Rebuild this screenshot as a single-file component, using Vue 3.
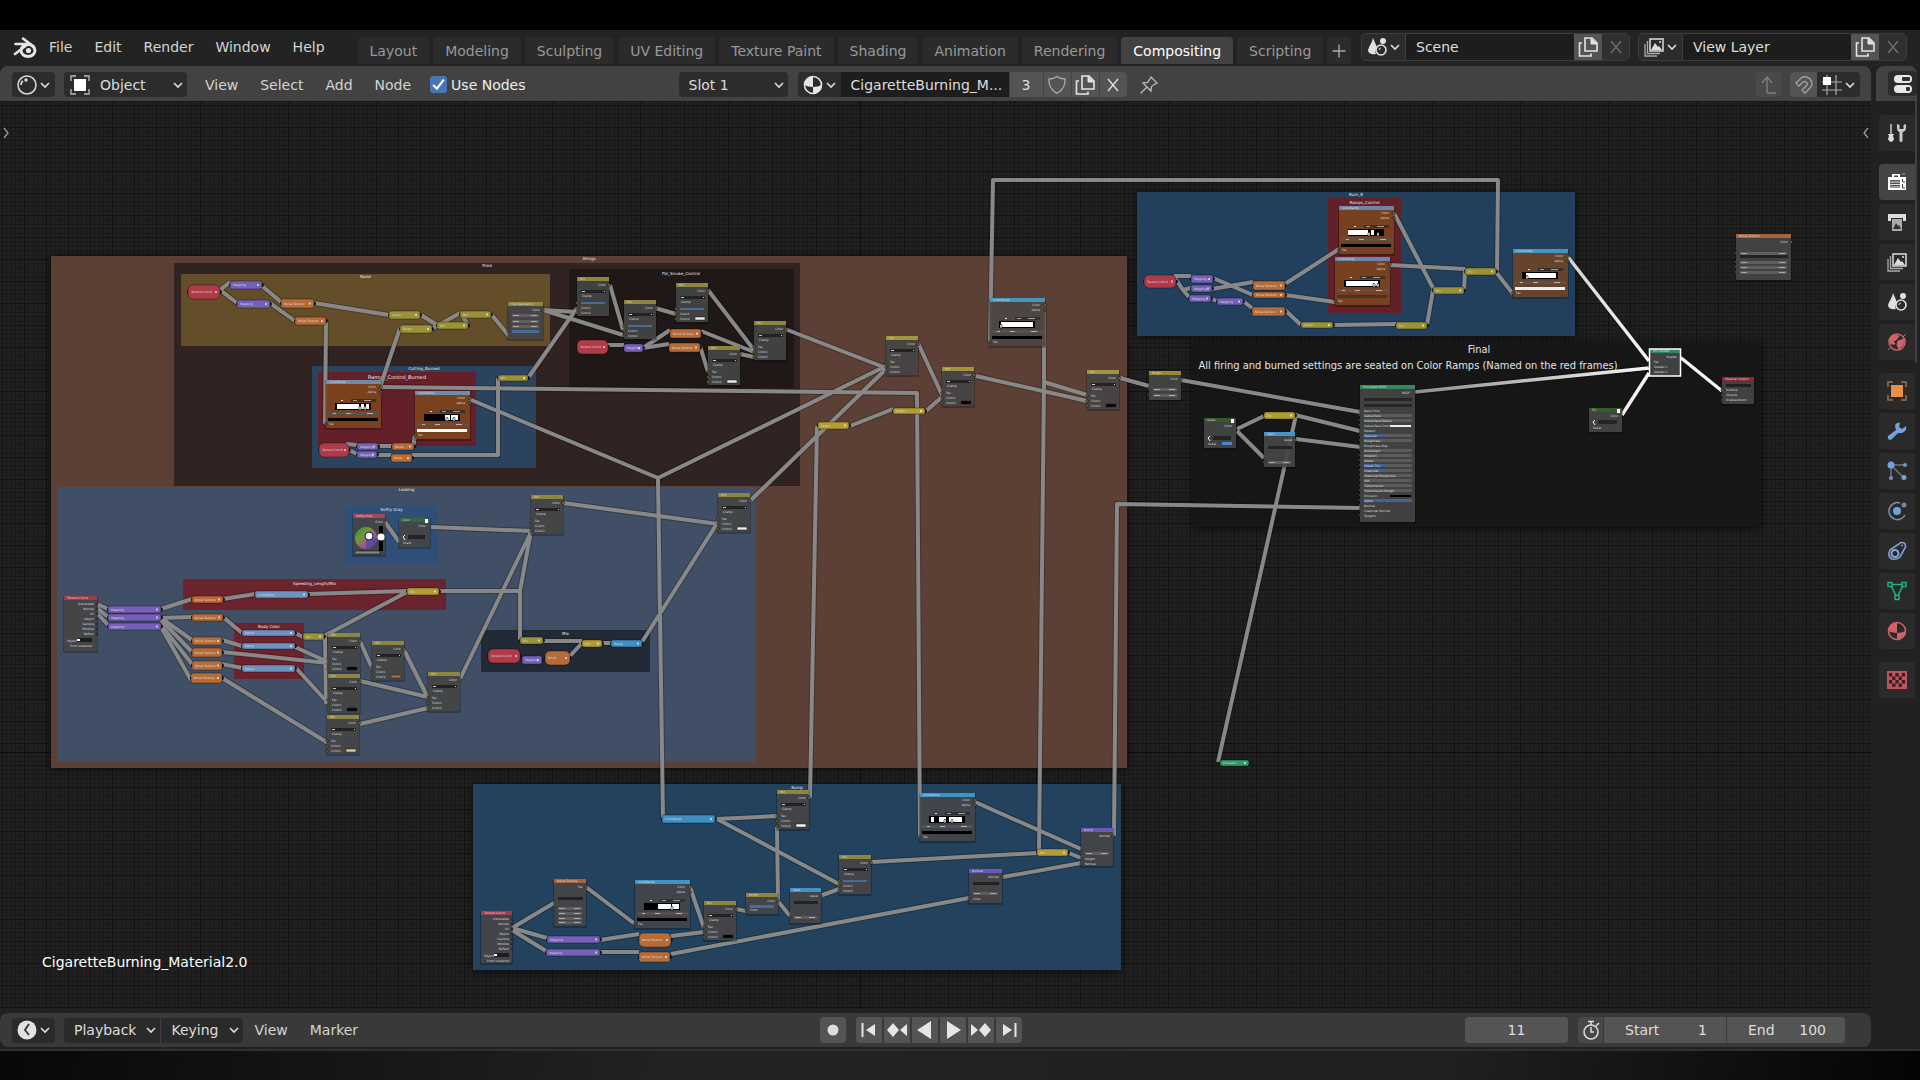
<template>
  <div class="screen">
    <header class="topbar">
      <svg class="logo" viewBox="0 0 24 22" v-html="icons.blender"></svg>
      <nav class="menus">
        <a v-for="m in menus" :key="m" href="#">{{ m }}</a>
      </nav>
      <nav class="tabs">
        <button
          v-for="t in workspaces"
          :key="t"
          class="tab"
          :class="{ active: t === activeTab }"
          @click="activeTab = t"
        >{{ t }}</button>
        <button class="tab plus" aria-label="Add workspace">
          <svg class="ico" viewBox="0 0 20 20" v-html="icons.plus"></svg>
        </button>
      </nav>
      <div class="datablocks">
        <div v-for="d in datablocks" :key="d.icon" class="datablock">
          <button class="pick" :aria-label="d.name">
            <svg class="ico" viewBox="0 0 20 20" v-html="icons[d.icon]"></svg>
            <svg class="chev" viewBox="0 0 10 10" v-html="icons.down"></svg>
          </button>
          <input v-model="d.name" type="text" :aria-label="d.icon" />
          <button class="copy" aria-label="New">
            <svg class="ico" viewBox="0 0 20 20" v-html="icons.copy"></svg>
          </button>
          <button class="close dim" aria-label="Unlink">
            <svg class="ico" viewBox="0 0 20 20" v-html="icons.close"></svg>
          </button>
        </div>
      </div>
    </header>

    <main class="workspace">
      <section class="editor">
        <div class="bar editor-header">
          <button class="pick boxed" aria-label="Editor type">
            <svg class="ico" viewBox="0 0 20 20" v-html="icons.shaderEditor"></svg>
            <svg class="chev" viewBox="0 0 10 10" v-html="icons.down"></svg>
          </button>
          <label class="drop mode">
            <svg class="ico" viewBox="0 0 20 20" v-html="icons.objectMode"></svg>
            <select aria-label="Shader type"><option>Object</option></select>
            <svg class="chev" viewBox="0 0 10 10" v-html="icons.down"></svg>
          </label>
          <nav class="menus header-menus">
            <a v-for="m in editorMenus" :key="m" href="#">{{ m }}</a>
          </nav>
          <label class="check">
            <input v-model="useNodes" type="checkbox" />
            <span class="tick"><svg viewBox="0 0 16 16" v-html="icons.tick"></svg></span>
            Use Nodes
          </label>
          <div class="slot-group">
            <label class="drop slot">
              <select aria-label="Slot"><option>Slot 1</option></select>
              <svg class="chev" viewBox="0 0 10 10" v-html="icons.down"></svg>
            </label>
            <div class="material">
              <button class="pick" aria-label="Browse material">
                <svg class="ico" viewBox="0 0 20 20" v-html="icons.material"></svg>
                <svg class="chev" viewBox="0 0 10 10" v-html="icons.down"></svg>
              </button>
              <input type="text" value="CigaretteBurning_M..." aria-label="Material name" />
              <button class="users">3</button>
              <button aria-label="Fake user">
                <svg class="ico soft" viewBox="0 0 20 20" v-html="icons.shield"></svg>
              </button>
              <button aria-label="New material">
                <svg class="ico" viewBox="0 0 20 20" v-html="icons.copy"></svg>
              </button>
              <button aria-label="Unlink material">
                <svg class="ico" viewBox="0 0 20 20" v-html="icons.close"></svg>
              </button>
            </div>
            <button class="bare" aria-label="Pin">
              <svg class="ico soft" viewBox="0 0 20 20" v-html="icons.pin"></svg>
            </button>
          </div>
          <div class="snap-group">
            <button class="up" aria-label="Parent node tree">
              <svg class="ico" viewBox="0 0 20 20" v-html="icons.up"></svg>
            </button>
            <div class="snap">
              <button class="magnet" aria-label="Snap">
                <svg class="ico" viewBox="0 0 20 20" v-html="icons.magnet"></svg>
              </button>
              <button class="pick" aria-label="Snap target">
                <svg class="ico" viewBox="0 0 20 20" v-html="icons.grid"></svg>
                <svg class="chev" viewBox="0 0 10 10" v-html="icons.down"></svg>
              </button>
            </div>
          </div>
        </div>

        <div class="canvas">
          <svg class="tree" width="100%" height="100%">
            <defs>
              <pattern id="grid" width="22" height="22" x="2" y="4" patternUnits="userSpaceOnUse">
                <rect width="22" height="22" fill="#202020" />
                <path d="M4.5 0V22M9.5 0V22M13.5 0V22M18.5 0V22M0 4.5H22M0 9.5H22M0 13.5H22M0 18.5H22" stroke="#191919" />
                <path d="M.5 0V22M0 .5H22" stroke="#111" />
              </pattern>
              <linearGradient id="lit" gradientUnits="userSpaceOnUse" x1="1415" x2="1640" y1="0" y2="0">
                <stop offset="0" stop-color="#8c8c8c" />
                <stop offset="1" stop-color="#f4f4f4" />
              </linearGradient>
              <linearGradient id="hue" x1="0" y1="0" x2="1" y2="1">
                <stop offset="0" stop-color="#1c8d3e" />
                <stop offset=".35" stop-color="#6e9a35" />
                <stop offset=".65" stop-color="#a8508c" />
                <stop offset="1" stop-color="#4a4ec4" />
              </linearGradient>
              <filter id="shade" x="-5%" y="-5%" width="110%" height="110%">
                <feDropShadow dx="0" dy="1" stdDeviation="4" flood-color="#000" flood-opacity=".7" />
              </filter>
            </defs>

            <rect width="100%" height="100%" fill="url(#grid)" />
            <path d="M860.5 0V920M0 651.5H1880" stroke="#0c0c0c" />

            <!-- tree coordinates start at the top of the window -->
            <g transform="translate(0 -101)">
              <g v-for="(f, i) in frames" :key="'f' + i">
                <rect
                  :x="f.x" :y="f.y" :width="f.w" :height="f.h"
                  :fill="f.c" fill-opacity=".92"
                  :filter="f.shadow ? 'url(#shade)' : null"
                />
                <text
                  v-if="f.t"
                  class="frame-label"
                  :x="f.tx || f.x + f.w / 2"
                  :y="f.y + (f.dy || 4)"
                  :font-size="f.fs || 4"
                >{{ f.t }}</text>
              </g>

              <polyline v-for="(l, i) in links" :key="'s' + i" class="link-edge" :points="l" />
              <polyline v-for="(l, i) in links" :key="'l' + i" class="link" :points="l" />
              <polyline v-for="(l, i) in litLinks" :key="'e' + i" class="link-edge" :points="l" />
              <polyline v-for="(l, i) in litLinks" :key="'a' + i" class="link lit" :points="l" />

              <!-- collapsed nodes -->
              <g v-for="(n, i) in pills" :key="'p' + i">
                <circle :cx="n.x + 1" :cy="n.y + n.h / 2" r="2" fill="#151515" />
                <circle :cx="n.x + n.w" :cy="n.y + n.h / 2" r="2" fill="#151515" />
                <rect
                  :x="n.x" :y="n.y" :width="n.w" :height="n.h" :rx="n.h > 12 ? 5 : 2"
                  :fill="n.c" stroke="#000" stroke-opacity=".45" stroke-width=".8"
                />
                <text class="tiny" :x="n.x + 3" :y="n.y + n.h / 2 + 1">{{ n.t }}</text>
                <rect :x="n.x + n.w - 5" :y="n.y + n.h / 2 - 1" width="2" height="2" fill="#fff" fill-opacity=".6" />
              </g>

              <!-- open nodes -->
              <g v-for="(n, i) in nodes" :key="'n' + i" :transform="`translate(${n.x} ${n.y})`">
                <rect x="-1" y="0" :width="n.w + 2" :height="n.h + 2" rx="1" fill="#000" fill-opacity=".25" />
                <rect :width="n.w" :height="n.h" rx="1" :fill="n.body || '#474747'" fill-opacity=".9" />
                <rect :width="n.w" height="4" :fill="n.c" />
                <text class="tiny" x="3" y="3">{{ n.t }}</text>

                <g v-if="n.kind === 'mix'">
                  <text class="tiny end" :x="n.w - 3" y="9">Color</text>
                  <rect x="4" y="13" :width="n.w - 7" height="3" fill="#222" />
                  <rect x="5" y="14" width="3" height="1" fill="#ccc" />
                  <rect :x="n.w - 5" y="14" width="1" height="1" fill="#ccc" />
                  <text class="tiny" x="5" y="20">Clamp</text>
                  <text v-if="!n.fac" class="tiny" x="4" y="27">Fac</text>
                  <rect v-else x="4" y="25" :width="n.w - 8" height="2" fill="#4a6a9c" />
                  <text class="tiny" x="4" y="32">Color1</text>
                  <text class="tiny" x="4" y="37">Color2</text>
                  <rect v-if="n.sw" :x="n.w - 13" y="34" width="10" height="3" :fill="n.sw" stroke="#222" stroke-width=".6" />
                  <circle :cx="n.w" cy="8" r="1.3" fill="#a9a45c" stroke="#111" stroke-width=".8" />
                  <circle v-for="y in [26, 31, 36]" :key="y" cx="0" :cy="y" r="1.2" fill="#a9a45c" stroke="#111" stroke-width=".8" />
                </g>

                <g v-else-if="n.kind === 'ramp'">
                  <text class="tiny end" x="50" y="8">Color</text>
                  <text class="tiny end" x="50" y="13">Alpha</text>
                  <rect x="15" y="20" width="2" height="1" fill="#ddd" />
                  <rect x="25" y="19" width="25" height="3" fill="#2c2c2c" fill-opacity=".8" />
                  <path d="M27 20.5h4M38 20.5h7" stroke="#bbb" stroke-width=".8" />
                  <rect x="9" y="23" width="36" height="7" fill="#000" />
                  <rect
                    v-for="(b, j) in n.bands" :key="j"
                    :x="b[0]" y="24" :width="b[1]" height="5" fill="#fff"
                  />
                  <path v-for="h in n.stops" :key="h" :d="`M${h} 30v-3l1 -1l1 1v3z`" fill="#fff" stroke="#000" stroke-width=".6" />
                  <rect x="2" y="32" width="51" height="3" fill="#5a5550" fill-opacity=".8" />
                  <path d="M7 33.5h3M20 33.5h5M41 33.5h6" stroke="#ccc" stroke-width=".8" />
                  <rect x="2" y="38" width="50" height="3" :fill="n.sw || '#000'" />
                  <text class="tiny" x="3" y="45">Fac</text>
                  <circle cx="55" cy="7" r="1.3" fill="#b8ac4a" stroke="#111" stroke-width=".8" />
                  <circle cx="55" cy="12" r="1.3" fill="#888" stroke="#111" stroke-width=".8" />
                  <circle cx="0" cy="44" r="1.3" fill="#888" stroke="#111" stroke-width=".8" />
                </g>

                <g v-else-if="n.kind === 'coord'">
                  <g v-for="(t, j) in coordOutputs" :key="t">
                    <text class="tiny end" :x="n.w - 3" :y="9 + j * 5">{{ t }}</text>
                    <circle :cx="n.w" :cy="8 + j * 5" r="1" fill="#6363c7" stroke="#111" stroke-width=".8" />
                  </g>
                  <rect x="13" y="42" width="15" height="4" fill="#1c1c1c" />
                  <rect x="13" y="43" width="3" height="2" fill="#fff" />
                  <text class="tiny" x="3" y="46">Object</text>
                  <text class="tiny" x="6" y="51">From Instancer</text>
                </g>

                <g v-else-if="n.kind === 'wheel'">
                  <text class="tiny end" :x="n.w - 2" y="9">Color</text>
                  <ellipse cx="13" cy="24" rx="11" ry="11" fill="url(#hue)" />
                  <path d="M13 24L24 24A11 11 0 0 1 13 35Z" fill="#3c46a0" fill-opacity=".6" />
                  <circle cx="16" cy="22" r="4" fill="#fff" stroke="#1a1a5a" />
                  <rect x="26" y="12" width="4" height="25" fill="#000" />
                  <circle cx="28" cy="23" r="3.5" fill="#fff" />
                  <rect x="2" y="37" width="25" height="3" fill="#888" stroke="#111" stroke-width=".6" />
                </g>

                <g v-else-if="n.kind === 'principled'">
                  <text class="tiny end" x="50" y="9">BSDF</text>
                  <rect x="4" y="13" width="48" height="3" fill="#262626" />
                  <rect x="4" y="19" width="48" height="3" fill="#262626" />
                  <g v-for="(r, j) in bsdfRows" :key="r">
                    <rect v-if="![0, 3, 4, 7, 17, 19, 20, 21].includes(j)" x="4" :y="24 + j * 5" width="48" height="3" fill="#5b5b5b" />
                    <rect v-if="[5, 11, 12].includes(j)" x="4" :y="24 + j * 5" width="21" height="3" fill="#446297" />
                    <rect v-if="j === 18" x="4" :y="24 + j * 5" width="48" height="3" fill="#446297" />
                    <text class="tiny" x="4" :y="27 + j * 5">{{ r }}</text>
                    <circle cx="0" :cy="25 + j * 5" r="1" fill="#888" stroke="#111" stroke-width=".6" />
                  </g>
                  <rect x="30" y="40" width="21" height="2" fill="#eee" />
                  <rect x="30" y="110" width="21" height="2" fill="#000" />
                </g>

                <g v-else-if="n.kind === 'group'">
                  <rect :x="n.w - 5" y="1" width="3" height="4" fill="#fff" />
                  <text class="tiny end" :x="n.w - 4" y="9">Color</text>
                  <path :d="`M6 ${n.h - 12}l-2 2l2 3`" stroke="#fff" fill="none" />
                  <rect x="9" :y="n.h - 12" :width="n.w - 14" height="4" fill="#242424" />
                  <rect v-if="n.sw" :x="n.w - 14" :y="n.h - 6" width="10" height="3" :fill="n.sw" />
                  <text class="tiny" x="4" :y="n.h - 3">Scale</text>
                </g>

                <g v-else>
                  <text class="tiny end" :x="n.w - 3" y="9">{{ n.out }}</text>
                  <g v-for="y in n.rows" :key="y">
                    <rect x="4" :y="y" :width="n.w - 8" height="3" fill="#5e5e5e" />
                    <path :d="`M5 ${y + 1.5}h6M${n.w - 12} ${y + 1.5}h6`" stroke="#bbb" stroke-width=".8" />
                    <circle cx="0" :cy="y + 1" r="1.1" fill="#999" stroke="#111" stroke-width=".7" />
                  </g>
                  <rect v-if="n.dd" x="4" :y="n.dd" :width="n.w - 7" height="3" fill="#222" />
                  <rect v-if="n.hl" x="4" :y="n.hl" :width="n.w - 8" height="3" fill="#4a6a9c" />
                  <g v-for="(t, j) in n.ins" :key="t">
                    <text class="tiny" x="4" :y="n.inY + j * 5">{{ t }}</text>
                    <circle cx="0" :cy="n.inY - 1 + j * 5" r="1.1" fill="#999" stroke="#111" stroke-width=".7" />
                  </g>
                  <circle v-if="n.out" :cx="n.w" cy="8" r="1.2" fill="#a9a45c" stroke="#111" stroke-width=".8" />
                </g>
                <rect v-if="n.active" x="-.5" y="0" :width="n.w + 1" :height="n.h" fill="none" stroke="#fff" stroke-width="1.5" />
              </g>

              <text class="note" x="1479" y="353">Final</text>
              <text class="note" x="1408" y="369">All firing and burned settings are seated on Color Ramps (Named on the red frames)</text>
              <text class="tree-name" x="42" y="967">CigaretteBurning_Material2.0</text>
            </g>
          </svg>
          <button class="edge left" aria-label="Show toolbar">
            <svg viewBox="0 0 8 14"><path d="M2 2l4 5l-4 5" /></svg>
          </button>
          <button class="edge right" aria-label="Show sidebar">
            <svg viewBox="0 0 8 14"><path d="M6 2l-4 5l4 5" /></svg>
          </button>
        </div>

        <div class="bar timeline">
          <button class="pick boxed" aria-label="Timeline">
            <svg class="ico" viewBox="0 0 20 20" v-html="icons.clock"></svg>
            <svg class="chev" viewBox="0 0 10 10" v-html="icons.down"></svg>
          </button>
          <div class="pair">
            <button v-for="m in ['Playback', 'Keying']" :key="m">
              {{ m }}
              <svg class="chev" viewBox="0 0 10 10" v-html="icons.down"></svg>
            </button>
          </div>
          <nav class="menus time-menus">
            <a href="#">View</a>
            <a href="#">Marker</a>
          </nav>
          <div class="transport">
            <button class="rec" aria-label="Auto keying">
              <svg class="ico" viewBox="0 0 20 20"><circle cx="10" cy="10" r="5.500" fill="#ddd" /></svg>
            </button>
            <div class="play">
              <button v-for="p in transport" :key="p" :aria-label="p">
                <svg class="ico" viewBox="0 0 20 20" v-html="icons[p]"></svg>
              </button>
            </div>
          </div>
          <div class="frames">
            <input class="current" type="text" v-model="frame" aria-label="Current frame" />
            <div class="range">
              <button aria-label="Use preview range">
                <svg class="ico" viewBox="0 0 20 20" v-html="icons.stopwatch"></svg>
              </button>
              <label>Start <input type="text" value="1" /></label>
              <label>End <input type="text" value="100" /></label>
            </div>
          </div>
        </div>
      </section>

      <aside class="props">
        <div class="props-header">
          <button aria-label="Properties editor">
            <svg class="ico" viewBox="0 0 20 20" v-html="icons.props"></svg>
          </button>
        </div>
        <div class="props-tabs">
          <div v-for="(g, i) in propGroups" :key="i" class="prop-group">
            <button v-for="p in g" :key="p" :class="{ on: p === 'render' }" :aria-label="p">
              <svg class="ico" viewBox="0 0 20 20" v-html="icons[p]"></svg>
            </button>
          </div>
          <span class="scroll"></span>
        </div>
      </aside>
    </main>
    <footer class="strip"></footer>
  </div>
</template>

<script setup>
import { ref } from "vue";

const menus = ["File", "Edit", "Render", "Window", "Help"];
const editorMenus = ["View", "Select", "Add", "Node"];
const workspaces = [
  "Layout", "Modeling", "Sculpting", "UV Editing", "Texture Paint",
  "Shading", "Animation", "Rendering", "Compositing", "Scripting",
];
const activeTab = ref("Compositing");
const useNodes = ref(true);
const frame = ref("11");
const datablocks = ref([
  { icon: "scene", name: "Scene" },
  { icon: "viewLayer", name: "View Layer" },
]);
const transport = ["first", "prevKey", "reverse", "forward", "nextKey", "last"];
const propGroups = [
  ["tool"],
  ["render", "output", "viewLayer", "scene", "world"],
  ["object", "modifier", "particles", "physics", "constraint", "mesh", "materialRed"],
  ["texture"],
];

const sceneIcon =
  '<path d="M6 1C8 6 10 9 10 12C8 12 8 15 9 17C4 18 1 16 1 13C2 9 5 6 6 1Z" fill="#e0e0e0"/><circle cx="16" cy="4" r="3" fill="#e0e0e0"/><circle cx="14" cy="13" r="5" fill="none" stroke="#e0e0e0" stroke-width="1.6"/><path d="M12 13q0-2 2-2" stroke="#e0e0e0" fill="none"/>';
const sphere = (c) =>
  `<circle cx="10" cy="10" r="8.5" fill="none" stroke="${c}" stroke-width="1.6"/><path d="M10 1.500A8.500 8.500 0 0 0 1.500 10Q5 12 10 12ZM10 12Q15 12 18.500 10A8.500 8.500 0 0 1 10 18.500Z" fill="${c}"/>`;

const icons = {
  blender:
    '<path d="M10 1.500L20.500 9.500M2.500 7H16M2 17L13 8.500" fill="none" stroke="#e6e6e6" stroke-width="2.600" stroke-linecap="round"/><ellipse cx="15" cy="13.500" rx="7" ry="6" fill="none" stroke="#e6e6e6" stroke-width="3"/><circle cx="15.500" cy="13.500" r="2.600" fill="#e6e6e6"/>',
  down: '<path d="M1 3L5 7L9 3" fill="none" stroke="#ddd" stroke-width="1.600"/>',
  plus: '<path d="M10 3.500V16.500M3.500 10H16.500" stroke="#aaa" stroke-width="1.400"/>',
  close: '<path d="M5 4L15 16M15 4L5 16" stroke="#ddd" stroke-width="1.500"/>',
  copy:
    '<path d="M7 1H14L19 6V14H7Z" fill="none" stroke="#e4e4e4" stroke-width="1.600"/><path d="M13 1V7H19" fill="#e4e4e4" stroke="#e4e4e4"/><path d="M4 6H1.500V19H13V16.500" fill="none" stroke="#e4e4e4" stroke-width="1.600"/>',
  scene: sceneIcon,
  viewLayer:
    '<rect x="6" y="2" width="13" height="12" fill="none" stroke="#ddd" stroke-width="1.500"/><path d="M7 13L11 6L14 10L15 9L18 13Z" fill="#ddd"/><circle cx="16" cy="5" r="1" fill="#ddd"/><path d="M3.500 4V16.500H16M1 7V19H13" fill="none" stroke="#aaa" stroke-width="1.300"/>',
  shaderEditor:
    '<circle cx="10" cy="10" r="9" fill="none" stroke="#ddd" stroke-width="1.500"/><circle cx="9" cy="5" r="1.700" fill="#ddd"/><path d="M4 10Q4 7 6 6" stroke="#ddd" stroke-width="1.800" fill="none"/>',
  objectMode:
    '<rect x="4" y="4" width="12" height="12" fill="#fff"/><path d="M1 6V1H6M14 1H19V6M19 14V19H14M6 19H1V14" fill="none" stroke="#bbb" stroke-width="1.300"/>',
  tick: '<path d="M3 8.500L6.500 12L13 3.500" fill="none" stroke="#fff" stroke-width="2"/>',
  material: sphere("#e6e6e6"),
  shield: '<path d="M10 1.500Q13 4 18 4Q19 13 10 18.500Q1 13 2 4Q7 4 10 1.500Z" fill="none" stroke="#aaa" stroke-width="1.300"/>',
  pin: '<path d="M12 2L18 8L16 9L12.500 11.500L12 16L4 8L8.500 7.500L11 4ZM8 12L1.500 18.500" fill="none" stroke="#bbb" stroke-width="1.300"/>',
  up: '<path d="M8 18V3M3 8L8 2L13 8M8 18H17" fill="none" stroke="#808080" stroke-width="1.400"/>',
  magnet:
    '<path d="M2 8L7 3Q12 0 16 4Q20 9 16 13L11 18L8 15L13 10Q14 8 12 7Q11 6 9 7L5 11Z" fill="none" stroke="#a4a4a4" stroke-width="1.300"/>',
  grid: '<path d="M0 7H20M0 15H20M5 0V20M14 0V20" stroke="#aaa" stroke-width="1.200"/><rect x="1" y="2" width="8" height="8" fill="#fff"/>',
  clock: '<circle cx="10" cy="10" r="9.500" fill="#e2e2e2"/><path d="M12 4L8 10L12 15" fill="none" stroke="#333" stroke-width="1.800"/>',
  first: '<path d="M3.500 3V17" stroke="#e6e6e6" stroke-width="2"/><path d="M16 4V16L7 10Z" fill="#e6e6e6"/>',
  last: '<path d="M16.500 3V17" stroke="#e6e6e6" stroke-width="2"/><path d="M4 4V16L13 10Z" fill="#e6e6e6"/>',
  prevKey: '<path d="M6 3L12 10L6 17L0 10ZM20 4V16L13 10Z" fill="#e6e6e6"/>',
  nextKey: '<path d="M14 3L20 10L14 17L8 10ZM0 4V16L7 10Z" fill="#e6e6e6"/>',
  reverse: '<path d="M16 1V19L2 10Z" fill="#e6e6e6"/>',
  forward: '<path d="M4 1V19L18 10Z" fill="#e6e6e6"/>',
  stopwatch:
    '<circle cx="10" cy="12" r="7" fill="none" stroke="#ddd" stroke-width="1.500"/><path d="M10 7V12H13M10 5V1M7 1.500H13M15 6L18 3" fill="none" stroke="#ddd" stroke-width="1.500"/>',
  props:
    '<rect x="1" y="1" width="18" height="8" rx="4" fill="#e8e8e8"/><rect x="9" y="3" width="8" height="4" rx="1" fill="#303030"/><rect x="1" y="11" width="18" height="8" rx="4" fill="#e8e8e8"/><rect x="13" y="13" width="4" height="4" rx="1" fill="#303030"/>',
  tool:
    '<path d="M4 1V11" stroke="#ccc" stroke-width="1.500"/><path d="M1 11H7L6 13L7 16Q6 19 4 19Q2 19 1 16L2 13Z" fill="#ddd"/><path d="M10 1V5Q10 8 12.500 9V18Q14 20 15.500 18V9Q19 8 19 5V1L16.500 2V6H12.500V2Z" fill="#ccc"/>',
  render:
    '<path d="M5 5V2H13V5H19V18H1V5Z" fill="#fff"/><rect x="7" y="3.500" width="4" height="1.500" fill="#444"/><rect x="3" y="8" width="10" height="8" fill="#555"/><path d="M3 10H13M3 12.500H13M3 15H13" stroke="#ddd"/><path d="M15.500 7V10H18M15.500 12V16H18" fill="none" stroke="#444"/><path d="M15 2H18" stroke="#aaa"/>',
  output: '<path d="M1 2H19V9H16V6H4V9H1Z" fill="#ddd"/><rect x="5" y="7" width="10" height="12" fill="#aaa"/><path d="M6 17L9 11L11 14L12 13L14 17Z" fill="#333"/>',
  world:
    '<circle cx="10" cy="10" r="8" fill="none" stroke="#d0626c" stroke-width="1.500"/><path d="M3 7L7 3L12 4L9 8L6 9L8 12L4 12ZM11 9L17 7L16 13L12 17L10 13ZM1 18L4 15M16 5L19 2" fill="#d0626c" stroke="#d0626c"/>',
  object:
    '<rect x="4" y="4" width="12" height="12" fill="#e8914a"/><path d="M1 6V1H6M14 1H19V6M19 14V19H14M6 19H1V14" fill="none" stroke="#9a7150" stroke-width="1.500"/>',
  modifier: '<path d="M19 5L15 8L12 6L13 2Q9 1 8 5L9 9L1 15Q0 18 3 19L5 18L11 12Q15 13 18 10Q20 8 19 5Z" fill="#76a0dc"/>',
  particles:
    '<path d="M4 4H18M4 4V18M4 4L17 17" stroke="#6a7480" stroke-width="1.500"/><circle cx="4" cy="4" r="3.500" fill="#76a0dc"/><circle cx="18" cy="4" r="2" fill="#7d95b8"/><circle cx="4" cy="17" r="2" fill="#7d95b8"/><circle cx="17" cy="16.500" r="2.500" fill="#76a0dc"/>',
  physics:
    '<circle cx="10" cy="10" r="4" fill="#76a0dc"/><path d="M13 2A8.500 8.500 0 1 0 18 14" fill="none" stroke="#8090a8" stroke-width="1.500"/><circle cx="17" cy="4" r="2.500" fill="#6f87ab"/>',
  constraint:
    '<path d="M3 9L14 1.500Q19 1 18.500 6L13 16Q10 19 5 18Q0 15 3 9Z" fill="none" stroke="#7f9fcc" stroke-width="1.600"/><circle cx="8" cy="12.500" r="3.500" fill="none" stroke="#7fa9e4" stroke-width="2"/><circle cx="15" cy="4.500" r="1" fill="#76a0dc"/>',
  mesh: '<path d="M3.500 3.500H16.500L10 16.500Z" fill="none" stroke="#1fb083" stroke-width="1.500"/><g fill="#262626" stroke="#1fb083" stroke-width="1.500"><rect x="1" y="1.500" width="4" height="4"/><rect x="15" y="1.500" width="4" height="4"/><rect x="8" y="14.500" width="4" height="4"/></g>',
  materialRed: sphere("#d0626c"),
  texture:
    '<rect x="0" y="1" width="20" height="18" fill="#b85560"/><path d="M2 3h3.200v3.500H2zM8.400 3h3.200v3.500H8.400zM14.800 3h3.200v3.500h-3.200zM5.200 6.500h3.200v3.500H5.200zM11.600 6.500h3.200v3.500h-3.200zM2 10h3.200v3.500H2zM8.400 10h3.200v3.500H8.400zM14.800 10h3.200v3.500h-3.200zM5.200 13.500h3.200v3.500H5.200zM11.600 13.500h3.200v3.500h-3.200z" fill="#3c1c22"/>',
};

// x, y, w, h, colour, label
const frames = [
  { x: 51, y: 256, w: 1076, h: 512, c: "#624236", t: "Allings", shadow: true },
  { x: 174, y: 263, w: 626, h: 223, c: "#2d211f", t: "Fired" },
  { x: 181, y: 274, w: 369, h: 72, c: "#68532a", t: "Noise" },
  { x: 569, y: 269, w: 225, h: 119, c: "#1e1817", t: "Fbl_Smoke_Control", tx: 681, dy: 6 },
  { x: 312, y: 366, w: 224, h: 102, c: "#2d4663", t: "Cutting_Burned" },
  { x: 318, y: 372, w: 158, h: 74, c: "#681d25", t: "Ramps_Control_Burned", dy: 7, fs: 5 },
  { x: 57, y: 487, w: 699, h: 275, c: "#3e5069", t: "Looking" },
  { x: 345, y: 506, w: 93, h: 57, c: "#2e4f79", t: "Softly Gray", dy: 5 },
  { x: 183, y: 579, w: 263, h: 31, c: "#6f2028", t: "Speeding_Length/Mix", dy: 6 },
  { x: 234, y: 623, w: 70, h: 56, c: "#6f2028", t: "Body Color", dy: 5 },
  { x: 481, y: 630, w: 169, h: 42, c: "#1f2731", t: "Mix", dy: 5 },
  { x: 473, y: 784, w: 648, h: 186, c: "#244463", t: "Bump", dy: 5, shadow: true },
  { x: 1137, y: 192, w: 438, h: 144, c: "#244362", t: "Burn_B", shadow: true },
  { x: 1328, y: 198, w: 73, h: 115, c: "#681d25", t: "Ramps_Control", dy: 6 },
  { x: 1194, y: 342, w: 566, h: 185, c: "#171717", shadow: true },
];

const red = "#b03a48";
const purple = "#7560b8";
const orange = "#b76c38";
const olive = "#9a9238";
const yellow = "#b39c34";
const steel = "#6d93c2";
const blue = "#408fc2";

const pill = (x, y, w, h, c, t) => ({ x, y, w, h, c, t });
const pills = [
  pill(188, 285, 32, 14, red, "Texture Coord"),
  pill(230, 281, 32, 8, purple, "Mapping"),
  pill(237, 300, 33, 8, purple, "Mapping"),
  pill(281, 299, 33, 9, orange, "Noise Texture"),
  pill(295, 317, 31, 8, orange, "Noise Texture"),
  pill(389, 311, 31, 8, olive, "Invert"),
  pill(400, 325, 32, 8, olive, "Bright"),
  pill(437, 322, 31, 7, olive, "Mix"),
  pill(460, 311, 31, 7, olive, "Mix"),
  pill(498, 375, 30, 6, olive, "Mix"),
  pill(319, 443, 30, 14, red, "Texture Coord"),
  pill(357, 443, 21, 7, purple, "Mapping"),
  pill(357, 451, 20, 7, purple, "Mapping"),
  pill(392, 443, 22, 7, orange, "Noise"),
  pill(391, 454, 21, 8, orange, "Noise"),
  pill(577, 340, 31, 14, red, "Texture Coord"),
  pill(624, 344, 19, 8, purple, "Mapping"),
  pill(670, 329, 31, 9, orange, "Noise Texture"),
  pill(669, 343, 31, 9, orange, "Noise Texture"),
  pill(818, 422, 31, 7, yellow, "Invert"),
  pill(893, 408, 32, 6, yellow, "Bright"),
  pill(108, 606, 53, 7, purple, "Mapping"),
  pill(108, 614, 53, 7, purple, "Mapping"),
  pill(108, 623, 53, 7, purple, "Mapping"),
  pill(192, 596, 31, 7, "#c26236", "Noise Texture"),
  pill(192, 614, 31, 7, orange, "Noise Texture"),
  pill(192, 637, 30, 8, orange, "Noise Texture"),
  pill(192, 648, 30, 9, orange, "Noise Texture"),
  pill(192, 661, 30, 9, orange, "Noise Texture"),
  pill(191, 673, 31, 10, orange, "Noise Texture"),
  pill(255, 591, 53, 7, steel, "ColorRamp"),
  pill(242, 630, 53, 6, steel, "Ramp"),
  pill(242, 643, 53, 6, steel, "Ramp"),
  pill(242, 665, 53, 7, steel, "Ramp"),
  pill(407, 588, 32, 7, yellow, "Mix"),
  pill(303, 633, 21, 7, olive, "Mix"),
  pill(488, 649, 32, 14, red, "Texture Coord"),
  pill(522, 656, 20, 8, purple, "Mapping"),
  pill(545, 651, 25, 14, orange, "Noise"),
  pill(520, 637, 23, 7, olive, "Mix"),
  pill(582, 640, 20, 7, yellow, "Mix"),
  pill(611, 640, 31, 7, blue, "Ramp"),
  pill(662, 815, 53, 8, blue, "ColorRamp"),
  pill(1037, 849, 31, 7, yellow, "Mix"),
  pill(547, 936, 53, 7, purple, "Mapping"),
  pill(546, 949, 54, 7, purple, "Mapping"),
  pill(639, 933, 32, 14, orange, "Noise Texture"),
  pill(639, 952, 31, 10, orange, "Noise Texture"),
  pill(1144, 275, 32, 13, red, "Texture Coord"),
  pill(1191, 275, 22, 8, purple, "Mapping"),
  pill(1191, 285, 21, 7, purple, "Mapping"),
  pill(1189, 295, 22, 7, purple, "Mapping"),
  pill(1217, 298, 26, 7, purple, "Mapping"),
  pill(1253, 281, 32, 9, orange, "Noise Texture"),
  pill(1253, 292, 32, 6, orange, "Noise Texture"),
  pill(1252, 307, 33, 9, orange, "Noise Texture"),
  pill(1301, 322, 32, 6, olive, "Invert"),
  pill(1396, 322, 31, 7, olive, "Mix"),
  pill(1433, 287, 31, 7, olive, "Mix"),
  pill(1465, 268, 31, 7, olive, "Mix"),
  pill(1264, 412, 31, 7, yellow, "Mix"),
  pill(1220, 760, 29, 6, "#2f9a63", "Emission"),
];

const mix = (x, y, extra) => ({ kind: "mix", x, y, w: 32, h: 39, c: "#8d8540", t: "Mix", ...extra });
const ramp = (x, y, c, body, bands, stops, sw) => ({
  kind: "ramp", x, y, w: 55, h: 48, c, body, bands, stops, sw, t: "ColorRamp",
});
const nodes = [
  { x: 508, y: 302, w: 35, h: 37, c: "#8d8540", t: "Hue Saturation", out: "Color", rows: [12, 18, 23, 28], hl: 28 },
  ramp(326, 380, "#7389a8", "#80461f", [[11, 22], [35, 3], [40, 3]], [33, 38]),
  ramp(415, 391, "#7389a8", "#80461f", [[30, 5], [36, 7]], [31, 38], "#fff"),
  mix(577, 277, { fac: true }),
  mix(624, 300, { fac: true }),
  mix(676, 283, { fac: true, sw: "#eee" }),
  mix(708, 346, { sw: "#eee" }),
  mix(754, 321),
  mix(886, 336, { c: "#a3923e" }),
  mix(942, 367, { c: "#a3923e", sw: "#000" }),
  mix(1087, 370, { c: "#a3923e", sw: "#000" }),
  ramp(990, 298, "#4a93bd", "#4c4845", [[11, 32]], [10]),
  { kind: "coord", x: 64, y: 596, w: 33, h: 55, c: "#a03a50", t: "Texture Coord" },
  { kind: "wheel", x: 353, y: 514, w: 32, h: 41, c: "#a84458", t: "Softly Gray" },
  { kind: "group", x: 399, y: 518, w: 31, h: 29, c: "#2f6640", t: "Color" },
  mix(531, 495),
  mix(718, 493, { sw: "#eee" }),
  mix(328, 633, { sw: "#000" }),
  mix(328, 674, { sw: "#000" }),
  mix(327, 715, { sw: "#d8d49a" }),
  mix(372, 641, { sw: "#c06a35" }),
  mix(428, 672),
  mix(777, 790, { sw: "#fff" }),
  ramp(920, 793, "#4093c4", "#45474b", [[11, 3], [19, 7], [29, 13]], [24, 31]),
  { x: 1081, y: 828, w: 32, h: 38, c: "#6b58b8", t: "Bump", out: "Normal", rows: [24], ins: ["Height", "Normal"], inY: 32 },
  mix(839, 855, { fac: true }),
  { x: 969, y: 869, w: 33, h: 34, c: "#6b58b8", t: "Normal", out: "Normal", dd: 13, rows: [23], ins: ["Color"], inY: 31 },
  { x: 554, y: 879, w: 32, h: 47, c: "#a8633c", t: "Noise Texture", out: "Fac", dd: 18, rows: [28, 33, 38, 42] },
  ramp(635, 880, "#4093c4", "#45474b", [[23, 13], [37, 7]], [36]),
  mix(704, 901, { sw: "#000" }),
  { x: 746, y: 893, w: 32, h: 21, c: "#8d8540", t: "Bright", out: "Color", rows: [12], hl: 12, ins: ["Color"], inY: 18 },
  { x: 790, y: 888, w: 31, h: 35, c: "#4093c4", t: "Math", out: "Value", dd: 13, rows: [28] },
  { kind: "coord", x: 481, y: 911, w: 31, h: 52, c: "#a03a50", t: "Texture Coord" },
  ramp(1339, 206, "#6b86ad", "#7c451e", [[9, 20], [32, 3]], [29, 38]),
  ramp(1335, 257, "#6b86ad", "#7c451e", [[11, 32]], [38, 42], "#4a3326"),
  ramp(1513, 249, "#4a93bd", "#6e4629", [[13, 30]], [13], "#eee"),
  { x: 1736, y: 234, w: 55, h: 46, c: "#a8633c", t: "Noise Texture", out: "Color", rows: [18, 27, 32, 37], dd: 21 },
  { x: 1149, y: 371, w: 32, h: 29, c: "#98882f", t: "Bright", out: "Color", rows: [17, 23] },
  { kind: "group", x: 1204, y: 418, w: 32, h: 30, c: "#38592a", t: "Scale", sw: "#4b86c8" },
  { x: 1264, y: 432, w: 31, h: 35, c: "#4a93c0", t: "Math", out: "Value", dd: 14, rows: [29] },
  { kind: "principled", x: 1360, y: 385, w: 55, h: 137, c: "#2f8a60", t: "Principled BSDF" },
  { x: 1650, y: 349, w: 30, h: 27, c: "#2f8a60", t: "Mix Shader", out: "Shader", ins: ["Fac", "Shader 1", "Shader 2"], inY: 14, active: true },
  { x: 1722, y: 377, w: 32, h: 27, c: "#8c2738", t: "Material Output", dd: 7, ins: ["Surface", "Volume", "Displacement"], inY: 14 },
  { kind: "group", x: 1589, y: 408, w: 33, h: 24, c: "#38592a", t: "Fix" },
];

const coordOutputs = ["Generated", "Normal", "UV", "Object", "Camera", "Window", "Reflect"];
const bsdfRows = [
  "Base Color", "Subsurface", "Subsurface Radius", "Subsurface Color", "Metallic", "Specular",
  "Roughness", "Roughness Map", "Anisotropic", "Rotation", "Sheen", "Sheen Tint",
  "Clearcoat", "Clearcoat Roughness", "IOR", "Transmission", "Transmission Rough",
  "Emission", "Alpha", "Normal", "Clearcoat Normal", "Tangent",
];

const links = [
  "220,290 230,282", "220,290 237,303", "261,285 281,302", "270,303 295,321",
  "314,303 389,315", "326,321 325,424", "380,387 400,328", "421,315 437,325",
  "433,328 437,326 460,313", "468,326 462,314", "491,314 509,336", "543,310 577,312",
  "543,310 623,335", "528,378 577,308", "380,387 917,393 920,838", "469,399 658,478 886,366",
  "658,478 663,819", "413,448 415,435", "346,444 357,445", "349,450 357,454",
  "378,446 392,446", "377,455 391,455", "412,455 498,455 498,378",
  "610,285 623,330", "655,308 676,314", "708,290 754,350", "607,345 624,345",
  "643,348 670,330", "643,348 669,344", "701,331 754,352", "700,346 708,372",
  "740,354 754,357", "785,329 886,368", "918,343 942,395", "850,426 893,409",
  "926,411 942,397", "976,376 1087,401", "1044,382 1087,395", "1044,307 1044,382 1039,850",
  "990,343 993,180 1498,180 1497,271", "1120,378 1149,386", "886,369 750,501",
  "817,426 810,798", "1181,380 1360,412", "1237,429 1264,416", "1237,431 1264,458",
  "1295,415 1360,431", "1296,439 1360,447", "1296,415 1268,540 1218,762",
  "1360,508 1117,504 1114,836",
  "1174,276 1191,276", "1175,278 1183,290 1191,288", "1183,290 1189,297", "1212,299 1217,301",
  "1213,278 1253,295", "1212,289 1253,282", "1243,301 1252,308", "1285,284 1339,249",
  "1285,295 1335,302", "1285,310 1301,325", "1333,325 1396,324", "1427,325 1433,290",
  "1464,290 1465,271", "1394,213 1433,288", "1390,265 1465,269", "1496,272 1513,294",
  "97,604 108,609", "97,608 108,617", "97,613 108,625", "161,609 192,599",
  "161,618 192,617", "161,618 192,640", "161,620 192,652", "161,625 192,664",
  "161,627 191,680", "223,599 255,594", "223,617 242,633", "222,640 242,646",
  "222,652 328,663", "222,664 242,668", "222,678 328,743", "295,633 303,637",
  "295,647 328,662", "296,668 328,703", "308,594 407,591", "324,636 407,592",
  "325,637 326,704", "440,591 520,591 520,640", "520,591 531,531", "360,641 372,668",
  "404,650 428,698", "360,681 428,697", "360,724 428,708", "460,679 531,532",
  "563,503 718,524", "543,641 582,641", "570,656 582,643", "603,643 611,643",
  "642,642 718,522", "385,522 399,542", "431,527 531,531",
  "716,819 777,816", "717,819 839,884", "777,827 778,900", "975,802 1081,849",
  "871,862 1037,853", "1069,853 1081,858", "1003,877 1081,863", "512,928 554,903",
  "512,928 547,938", "512,930 546,951", "586,887 635,924", "690,887 704,928",
  "600,940 639,934", "600,952 639,952", "671,936 704,932", "671,954 969,898",
  "736,909 746,911", "777,900 790,916", "820,896 839,889",
];
const litLinks = ["1415,392 1649,368", "1622,415 1649,373", "1680,357 1722,391", "1568,257 1649,361"];
</script>

<style>
body {
  background: #000;
}
</style>

<style scoped>
.screen {
  display: flex;
  flex-direction: column;
  height: 100vh;
  min-height: 800px;
  padding-top: 30px;
  box-sizing: border-box;
  background: #000;
  color: #ddd;
  font: 14px/20px "DejaVu Sans", sans-serif;
  overflow: hidden;
}

button,
input,
select {
  font: inherit;
  color: inherit;
  border: 0;
  margin: 0;
  padding: 0;
  background: none;
  box-sizing: border-box;
  min-width: 0;
}

button {
  display: flex;
  align-items: center;
  justify-content: center;
}

a {
  color: #d4d4d4;
  text-decoration: none;
}

.ico {
  width: 20px;
  height: 20px;
  flex: none;
}

.chev {
  width: 10px;
  height: 10px;
  flex: none;
}

.menus {
  display: flex;
  gap: 22px;
}

/* top bar */
.topbar {
  display: flex;
  align-items: flex-start;
  height: 36px;
  flex: none;
  background: #232323;
}

.logo {
  width: 24px;
  height: 22px;
  margin: 7px 12px 0 13px;
}

.topbar .menus {
  padding-top: 7px;
}

.tabs {
  display: flex;
  gap: 4px;
  margin: 7px 0 0 33px;
}

.tab {
  height: 27px;
  padding: 0 12px;
  border-radius: 4px 4px 0 0;
  background: #2b2b2b;
  color: #999;
  white-space: nowrap;
}

.tab.active {
  background: #424242;
  color: #fff;
}

.tab.plus {
  padding: 0 2px;
}

.datablocks {
  display: flex;
  gap: 8px;
  margin: 3px 13px 0 auto;
}

.datablock {
  display: flex;
  width: 269px;
  height: 28px;
  box-sizing: border-box;
  border: 1px solid #3d3d3d;
  border-radius: 5px;
  overflow: hidden;
  background: #2b2b2b;
}

.pick {
  width: 43px;
  gap: 3px;
}

.datablock input {
  flex: 1;
  padding-left: 10px;
  background: #1d1d1d;
  border-left: 1px solid #3d3d3d;
}

.copy {
  width: 28px;
  background: #545454;
}

.close {
  width: 27px;
  background: #303030;
}

.dim .ico {
  opacity: 0.35;
}

/* editor */
.workspace {
  flex: 1;
  display: flex;
  gap: 5px;
  min-height: 0;
  padding-right: 3px;
  background: #212121;
  border-bottom: 2px solid #303030;
}

.editor {
  flex: 1;
  min-width: 0;
  display: flex;
  flex-direction: column;
  padding-bottom: 2px;
}

.bar {
  display: flex;
  align-items: center;
  flex: none;
  padding: 0 11px 0 12px;
}

.editor-header {
  height: 35px;
  padding-top: 2px;
  box-sizing: border-box;
  background: #424242;
  border-radius: 8px 8px 0 0;
}

.boxed,
.drop,
.slot,
.up {
  height: 25px;
  border-radius: 4px;
  background: #2c2c2c;
}

.boxed {
  margin-right: 9px;
}

.drop {
  display: flex;
  align-items: center;
  box-sizing: border-box;
  padding: 0 4px 0 6px;
}

.drop select {
  flex: 1;
  appearance: none;
}

.mode {
  width: 123px;
  gap: 10px;
}

.header-menus {
  margin-left: 18px;
}

.check {
  display: flex;
  align-items: center;
  gap: 4px;
  margin-left: 19px;
  color: #eee;
}

.check input {
  position: absolute;
  opacity: 0;
}

.tick {
  display: flex;
  width: 17px;
  height: 17px;
  border-radius: 3px;
  background: #4a74b8;
}

.check input:not(:checked) + .tick {
  background: #555;
}

.tick svg {
  width: 17px;
  height: 17px;
}

.slot-group {
  display: flex;
  align-items: center;
  margin-left: 153px;
}

.slot {
  width: 109px;
  padding-left: 10px;
}

.material {
  display: flex;
  height: 25px;
  margin: 0 12px 0 10px;
  border-radius: 4px;
  overflow: hidden;
  background: #2c2c2c;
}

.material input {
  width: 168px;
  padding-left: 10px;
  background: #1d1d1d;
}

.material button:not(.pick) {
  width: 28px;
  background: #545454;
  border-left: 1px solid #424242;
}

.material button.users {
  width: 34px;
}

.snap-group {
  display: flex;
  gap: 9px;
  margin-left: auto;
}

.up {
  width: 25px;
  background: #4a4a4a;
}

.snap {
  display: flex;
  height: 25px;
  border-radius: 4px;
  overflow: hidden;
  background: #2c2c2c;
}

.magnet {
  width: 27px;
  background: #545454;
}

.canvas {
  flex: 1;
  min-height: 0;
  position: relative;
  overflow: hidden;
  background: #1d1d1d;
}

.tree {
  display: block;
}

.link {
  fill: none;
  stroke: #888;
  stroke-width: 4;
  stroke-linejoin: round;
}

.link-edge {
  fill: none;
  stroke: #000;
  stroke-opacity: 0.25;
  stroke-width: 6;
}

.lit {
  stroke: url(#lit);
  stroke-width: 3.5;
}

.frame-label {
  fill: #eee;
  text-anchor: middle;
}

.tiny {
  fill: #ddd;
  font-size: 3px;
}

.end {
  text-anchor: end;
}

.note {
  fill: #e4e4e4;
  font-family: "DejaVu Sans Condensed", "DejaVu Sans", sans-serif;
  font-size: 11px;
  text-anchor: middle;
}

.tree-name {
  fill: #fff;
}

.edge {
  position: absolute;
  top: 24px;
  width: 10px;
  height: 16px;
}

.edge svg {
  width: 8px;
  height: 14px;
  fill: none;
  stroke: #999;
  stroke-width: 1.3;
}

.left {
  left: 1px;
}

.right {
  right: 0;
}

/* timeline */
.timeline {
  height: 34px;
  margin-top: 4px;
  padding-right: 26px;
  background: #393939;
  border-radius: 8px;
}

.timeline .boxed {
  background: #2a2a2a;
}

.pair {
  display: flex;
  height: 25px;
  border-radius: 4px;
  overflow: hidden;
  background: #2a2a2a;
}

.pair button {
  gap: 10px;
  padding: 0 4px 0 10px;
}

.pair button + button {
  border-left: 1px solid #414141;
}

.time-menus {
  margin-left: 12px;
}

.transport {
  display: flex;
  gap: 10px;
  margin-left: auto;
}

.transport button {
  width: 26px;
  height: 26px;
  background: #545454;
}

.transport .rec {
  border-radius: 4px;
}

.play {
  display: flex;
  gap: 2px;
  border-radius: 4px;
  overflow: hidden;
}

.frames {
  display: flex;
  gap: 10px;
  margin-left: 443px;
}

.frames input {
  text-align: right;
}

.frames .current {
  width: 103px;
  height: 26px;
  border-radius: 4px;
  background: #545454;
  text-align: center;
}

.range {
  display: flex;
  gap: 1px;
  height: 26px;
  border-radius: 4px;
  overflow: hidden;
}

.range button {
  width: 25px;
  background: #484848;
}

.range label {
  display: flex;
  align-items: center;
  justify-content: space-between;
  width: 122px;
  box-sizing: border-box;
  padding: 0 19px 0 21px;
  background: #545454;
}

.range label + label {
  width: 118px;
}

.range input {
  width: 40px;
}

/* properties column */
.props {
  width: 41px;
  display: flex;
  flex-direction: column;
}

.props-header {
  display: flex;
  justify-content: flex-end;
  align-items: center;
  height: 35px;
  background: #424242;
  border-radius: 8px 8px 0 0;
}

.props-header button {
  width: 29px;
  height: 25px;
  border-radius: 4px;
  background: #2c2c2c;
}

.props-tabs {
  position: relative;
  padding: 14px 2px 0 3px;
}

.prop-group {
  display: flex;
  flex-direction: column;
  gap: 4px;
  margin-bottom: 13px;
}

.prop-group button {
  height: 36px;
  border-radius: 4px 0 0 4px;
  background: #2a2a2a;
}

.prop-group button.on {
  background: #454545;
}

.scroll {
  position: absolute;
  top: 0;
  right: 0;
  width: 2px;
  height: 262px;
  background: #404040;
}

.strip {
  flex: none;
  height: 29px;
  background: linear-gradient(100deg, #080808, #222 35%, #202020 75%, #040404);
}
</style>
